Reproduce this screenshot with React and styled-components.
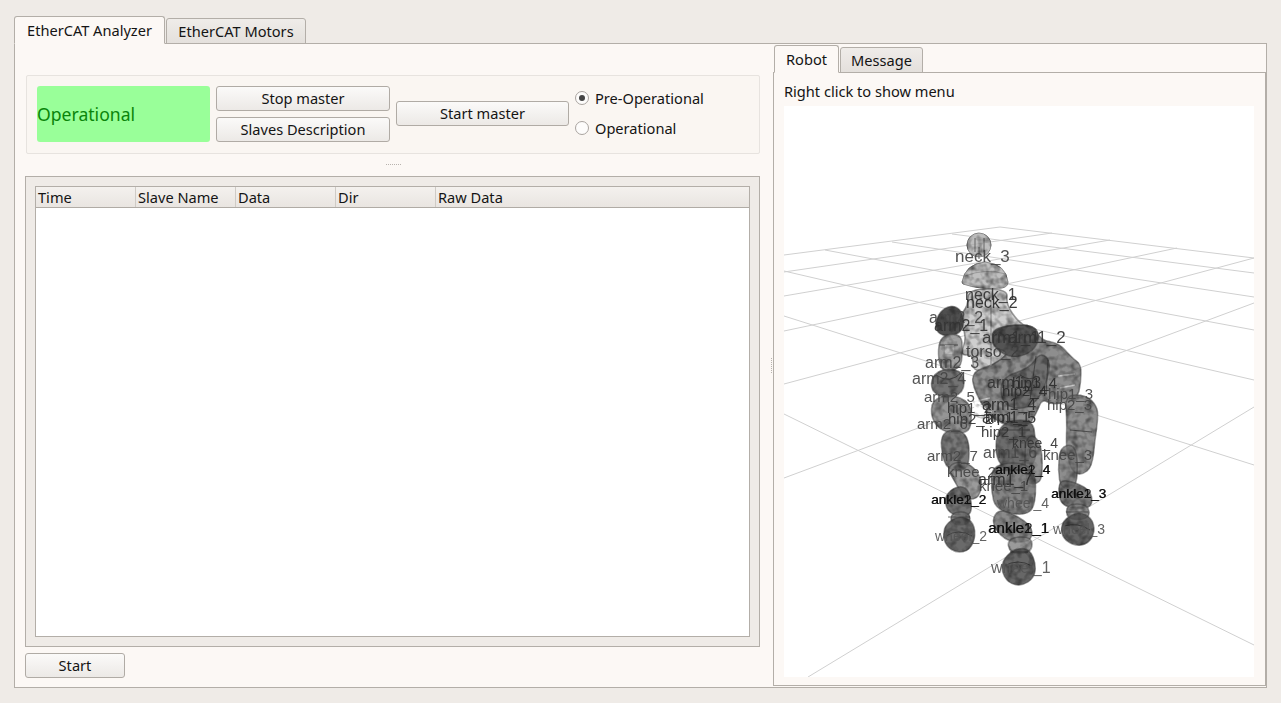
import React from "react";
import styled, { createGlobalStyle } from "styled-components";

const UI_FONT = '"Noto Sans", "Open Sans", "DejaVu Sans", sans-serif';

const GlobalStyle = createGlobalStyle`
  html, body {
    margin: 0;
    height: 703px;
    overflow: hidden;
    background: #efebe7;
  }
  body {
    font-family: ${UI_FONT};
    font-size: 14.6px;
    color: #141414;
  }
`;

const Page = styled.div`
  width: 1281px;
  height: 703px;
  box-sizing: border-box;
  padding: 16px 14px 15px;
  display: flex;
  flex-direction: column;
`;

const TabBar = styled.div`
  display: flex;
  align-items: flex-end;
  height: 28px;
  position: relative;
  z-index: 1;
  margin-bottom: -1px;
  padding-left: ${p => p.$inset || 0}px;
`;

const Tab = styled.div`
  box-sizing: border-box;
  width: ${p => p.width}px;
  height: ${p => (p.active ? "100%" : "calc(100% - 2px)")};
  margin-right: 1px;
  display: flex;
  align-items: center;
  justify-content: center;
  border: 1px solid #b3aea8;
  border-bottom: ${p => (p.active ? "1px solid #fcf8f5" : "1px solid #b3aea8")};
  border-radius: 3px 3px 0 0;
  background: ${p => (p.active ? "#fcf8f5" : "linear-gradient(#efece9, #e4e0dc)")};
  white-space: nowrap;
`;

const MainPane = styled.div`
  flex: 1;
  min-height: 0;
  display: flex;
  box-sizing: border-box;
  border: 1px solid #b3aea8;
  background: #fcf8f5;
  padding: 0 0 1px 10px;
`;

const LeftColumn = styled.div`
  width: 735px;
  display: flex;
  flex-direction: column;
  padding-top: 31px;
  box-sizing: border-box;
`;

const ControlBox = styled.div`
  margin-left: 1px;
  height: 79px;
  box-sizing: border-box;
  padding: 10px 10px 11px;
  display: flex;
  gap: 6px;
  align-items: stretch;
  border: 1px solid #e7e3df;
  border-radius: 2px;
  background: #faf6f2;
`;

const StatusLabel = styled.div`
  width: 173px;
  display: flex;
  align-items: center;
  border-radius: 3px;
  background: #99ff99;
  color: #0a850a;
  font-size: 17.6px;
`;

const ButtonStack = styled.div`
  width: 174px;
  display: flex;
  flex-direction: column;
  justify-content: space-between;
`;

const CenterSlot = styled.div`
  width: 173px;
  display: flex;
  align-items: center;
  padding-bottom: 1px;
`;

const Button = styled.div`
  box-sizing: border-box;
  width: ${p => (p.width ? `${p.width}px` : "100%")};
  height: 25px;
  padding-bottom: 2px;
  display: flex;
  align-items: center;
  justify-content: center;
  border: 1px solid #b0aba5;
  border-radius: 3px;
  background: linear-gradient(#fbfaf9, #ece9e6);
`;

const RadioGroup = styled.div`
  display: flex;
  flex-direction: column;
  justify-content: center;
  gap: 10px;
  padding-bottom: 2px;
`;

const RadioRow = styled.div`
  height: 20px;
  display: flex;
  align-items: center;
  gap: 6px;
`;

const RadioMark = styled.span`
  box-sizing: border-box;
  width: 14px;
  height: 14px;
  border-radius: 50%;
  border: 1px solid #a9a4a0;
  background: #fdfcfb;
  display: flex;
  align-items: center;
  justify-content: center;
  &::after {
    content: "";
    width: 6px;
    height: 6px;
    border-radius: 50%;
    background: ${p => (p.checked ? "#444" : "transparent")};
  }
`;

const RowHandle = styled.div`
  height: 22px;
  box-sizing: border-box;
  padding: 0 0 2px 2px;
  display: flex;
  align-items: center;
  justify-content: center;
  &::after {
    content: "";
    width: 15px;
    border-top: 1px dotted #b8b3ae;
  }
`;

const TableFrame = styled.div`
  height: 471px;
  box-sizing: border-box;
  padding: 9px;
  border: 1px solid #b3aea8;
  background: #efebe7;
  display: flex;
`;

const Table = styled.div`
  flex: 1;
  display: flex;
  flex-direction: column;
  border: 1px solid #b3aea8;
  background: #fff;
`;

const TableHead = styled.div`
  height: 20px;
  display: flex;
  border-bottom: 1px solid #b0aba5;
  background: linear-gradient(#f4f1ee, #e9e5e1);
`;

const HeadCell = styled.div`
  box-sizing: border-box;
  width: ${p => (p.last ? "auto" : "100px")};
  flex: ${p => (p.last ? 1 : "none")};
  padding-left: 2px;
  display: flex;
  align-items: center;
  border-right: ${p => (p.last ? "none" : "1px solid #cfcbc6")};
`;

const BottomRow = styled.div`
  padding-top: 6px;
`;

const ColumnHandle = styled.div`
  width: 13px;
  display: flex;
  align-items: center;
  &::after {
    content: "";
    margin-left: 11px;
    height: 15px;
    border-left: 1px dotted #b8b3ae;
  }
`;

const RightColumn = styled.div`
  flex: 1;
  display: flex;
  flex-direction: column;
  padding-top: 1px;
`;

const RobotPane = styled.div`
  flex: 1;
  min-height: 0;
  box-sizing: border-box;
  border: 1px solid #b3aea8;
  padding: 0 11px 8px 10px;
  display: flex;
  flex-direction: column;
`;

const Hint = styled.div`
  height: 33px;
  padding-top: 2px;
  box-sizing: border-box;
  display: flex;
  align-items: center;
`;

const Viewer = styled.svg`
  flex: 1;
  min-height: 0;
  width: 100%;
  display: block;
  background: #fff;
`;

const GRID_LINES = [
  [784, 255, 1000, 227],
  [784, 272, 1052, 233],
  [784, 296, 1110, 240],
  [784, 331, 1177, 248],
  [784, 384, 1254, 258],
  [784, 478, 1254, 303],
  [808, 677, 1254, 407],
  [1000, 227, 1254, 258],
  [952, 234, 1254, 273],
  [892, 242, 1254, 297],
  [825, 250, 1254, 330],
  [784, 271, 1254, 380],
  [784, 316, 1254, 465],
  [784, 414, 1254, 645],
];

// outlines of the translucent robot links, back to front
const LINKS = [
  // chest
  ["968 289 1008 289 1006 304 1019 323 1034 330 1010 352 990 368 973 372 973 354 960 356 967 336 958 318 968 306", "#c6c6c6", 0.85],
  // pelvis and right arm
  ["971 372 993 365 1010 353 993 347 991 331 1007 325 1035 325 1040 340 1059 343 1072 358 1081 364 1081 382 1077 400 1053 405 1042 399 1037 412 1027 429 993 422 975 393", "#7a7a7a", 0.85],
  ["991 333 1007 325 1035 325 1040 340 1030 354 1010 358 993 347", "#404040", 0.7],
  ["1000 378 1030 368 1040 352 1052 362 1042 396 1025 410 1002 405", "#505050", 0.5],
  // arm on the left
  ["936 318 945 307 957 306 964 316 963 331 950 337 936 333", "#303030", 0.85],
  ["938 336 961 333 963 352 960 370 939 372", "#909090", 0.85],
  ["932 376 945 368 964 372 964 393 945 399 931 391", "#505050", 0.8],
  ["932 400 950 394 970 402 972 422 967 434 942 432 931 418", "#7a7a7a", 0.8],
  ["940 430 968 430 970 468 955 472 943 464", "#606060", 0.85],
  ["946 466 965 460 982 476 980 498 966 500 956 484", "#828282", 0.8],
  ["945 495 957 486 968 488 972 505 970 516 955 516 946 509", "#5a5a5a", 0.85],
  ["951 512 970 512 970 525 951 525", "#7a7a7a", 0.8],
  ["946 524 958 516 972 520 976 535 970 550 957 553 946 546 943 534", "#505050", 0.85],
  // centre leg
  ["996 423 1032 418 1036 440 1035 470 996 470", "#525252", 0.85],
  ["1025 434 1041 439 1043 478 1035 485 1025 482", "#787878", 0.8],
  ["992 463 1035 463 1036 507 1023 516 996 510 991 490", "#6e6e6e", 0.85],
  ["994 514 1004 509 1032 525 1032 540 1018 543 1004 539 993 526", "#767676", 0.85],
  ["1007 538 1032 536 1032 553 1010 554", "#848484", 0.82],
  ["1004 558 1016 548 1030 549 1036 565 1034 578 1022 586 1008 583 1001 570", "#4c4c4c", 0.85],
  // right leg
  ["1065 395 1086 395 1097 406 1098 418 1095 440 1092 467 1082 475 1072 472 1066 452 1067 420", "#7a7a7a", 0.85],
  ["1060 447 1074 444 1078 462 1076 489 1061 489 1058 470", "#707070", 0.8],
  ["1058 482 1068 480 1090 489 1093 505 1083 509 1060 506", "#646464", 0.85],
  ["1066 504 1088 504 1090 519 1067 520", "#7e7e7e", 0.8],
  ["1064 520 1078 511 1092 518 1095 532 1088 544 1074 546 1063 538 1061 528", "#4a4a4a", 0.85],
];

const SHADING = [
  ["M973 402L990 398M975 408L988 405M978 414L992 412M1058 376L1075 374M1060 388L1075 385", "#f0f0f0", 1.4],
  ["M1036 356L1030 400M1048 360L1046 395M1020 375Q1030 382 1036 376M1000 430H1030M1000 470H1032", "#2c2c2c", 1],
  ["M940 345H958M936 375Q950 385 962 372M1070 430L1092 432M946 536Q958 528 972 536", "#2c2c2c", 1],
  ["M1064 526Q1078 522 1090 530M1004 566Q1018 558 1032 566M1010 552H1028M948 517H970M1066 512H1088", "#222222", 1],
];

const LABELS = [
  ["neck_3", 955, 262, 17, "#444"],
  ["neck_1", 965, 300, 16, "#333"],
  ["neck_2", 966, 308, 16, "#2a2a2a"],
  ["arm2_2", 929, 323, 16, "#444"],
  ["arm2_1", 934, 331, 16, "#333"],
  ["arm1_1", 982, 343, 17, "#333"],
  ["arm1_2", 1008, 343, 17, "#333"],
  ["torso_2", 966, 357, 16, "#3c3c3c"],
  ["arm2_3", 925, 368, 16, "#444"],
  ["arm2_4", 912, 384, 16, "#444"],
  ["arm1_3", 987, 388, 16, "#333"],
  ["hip1_4", 1012, 388, 15, "#2a2a2a"],
  ["hip2_4", 1002, 396, 15, "#2a2a2a"],
  ["hip1_3", 1048, 399, 15, "#444"],
  ["arm2_5", 924, 402, 15, "#444"],
  ["hip2_3", 1047, 410, 15, "#444"],
  ["arm1_4", 982, 410, 16, "#2a2a2a"],
  ["hip1_2", 947, 413, 15, "#333"],
  ["hip2_2", 948, 424, 15, "#333"],
  ["arm1_5", 982, 423, 16, "#2a2a2a"],
  ["hip1_1", 985, 422, 15, "#2a2a2a"],
  ["arm2_6", 917, 429, 15, "#444"],
  ["hip2_1", 981, 437, 15, "#333"],
  ["knee_4", 1012, 448, 14, "#333"],
  ["arm1_6", 983, 458, 16, "#444"],
  ["knee_3", 1043, 460, 15, "#444"],
  ["arm2_7", 927, 461, 15, "#444"],
  ["knee_2", 947, 477, 15, "#444"],
  ["ankle1_4", 995, 474, 13.6, "#111"],
  ["ankle2_4", 995.5, 474, 13.6, "#111"],
  ["arm1_7", 978, 485, 16, "#2a2a2a"],
  ["knee_1", 979, 491, 15, "#444"],
  ["ankle1_3", 1051, 498, 13.6, "#0c0c0c"],
  ["ankle2_3", 1051.5, 498, 13.6, "#0c0c0c"],
  ["ankle1_2", 931, 504, 13.6, "#0c0c0c"],
  ["ankle2_2", 931.5, 504, 13.6, "#0c0c0c"],
  ["wheel_4", 997, 508, 14, "#555"],
  ["ankle1_1", 988, 533, 15, "#0c0c0c"],
  ["ankle2_1", 988.5, 533, 15, "#0c0c0c"],
  ["wheel_3", 1053, 534, 14, "#555"],
  ["wheel_2", 935, 541, 14, "#555"],
  ["wheel_1", 991, 573, 16, "#555"],
];

// rounds a list of corner points into a closed curve through the edge midpoints
const smoothOutline = list => {
  const nums = list.split(" ").map(Number);
  const pts = [];
  for (let i = 0; i < nums.length; i += 2) pts.push([nums[i], nums[i + 1]]);
  const mid = (a, b) => [(a[0] + b[0]) / 2, (a[1] + b[1]) / 2];
  const start = mid(pts[pts.length - 1], pts[0]);
  let d = `M${start[0]} ${start[1]}`;
  pts.forEach((p, i) => {
    const m = mid(p, pts[(i + 1) % pts.length]);
    d += `Q${p[0]} ${p[1]} ${m[0]} ${m[1]}`;
  });
  return d + "Z";
};

const RobotScene = () => (
  <Viewer viewBox="784 106 470 571" preserveAspectRatio="xMinYMin slice">
    <defs>
      <filter id="mottle" x="-5%" y="-5%" width="110%" height="110%" colorInterpolationFilters="sRGB">
        <feTurbulence type="fractalNoise" baseFrequency="0.14" numOctaves="2" seed="7" result="noise" />
        <feColorMatrix
          in="noise"
          type="matrix"
          values="0 0 0 0 0.1  0 0 0 0 0.1  0 0 0 0 0.1  1.5 0 0 0 -0.6"
          result="dark"
        />
        <feComposite in="dark" in2="SourceAlpha" operator="in" result="tex" />
        <feMerge result="merged">
          <feMergeNode in="SourceGraphic" />
          <feMergeNode in="tex" />
        </feMerge>
        <feGaussianBlur in="merged" stdDeviation="0.6" />
      </filter>
      <filter id="softer" x="-5%" y="-5%" width="110%" height="110%">
        <feGaussianBlur stdDeviation="0.3" />
      </filter>
    </defs>
    {GRID_LINES.map(([x1, y1, x2, y2], i) => (
      <line key={i} x1={x1} y1={y1} x2={x2} y2={y2} stroke="#d0d0d0" strokeWidth="1" />
    ))}
    <g filter="url(#mottle)">
      <circle cx="979" cy="245" r="12" fill="#a8a8a8" fillOpacity="0.75" stroke="#8a8a8a" />
      <path d="M975 238v14M984 238v14M979 247v12" stroke="#666" fill="none" />
      <path
        d="M962 282Q965 264 985 262Q1006 264 1008 282Q1008 287 1002 288Q980 290 963 284Z"
        fill="#b8b8b8"
        fillOpacity="0.9"
        stroke="#8c8c8c"
      />
      <path d="M965 276Q985 268 1006 274" stroke="#999" fill="none" />
      {LINKS.map(([points, fill, op], i) => (
        <path
          key={i}
          d={smoothOutline(points)}
          fill={fill}
          fillOpacity={op}
          stroke="#3a3a3a"
          strokeOpacity="0.45"
          strokeWidth="1.5"
        />
      ))}
      <line x1="991" y1="300" x2="991" y2="366" stroke="#999" strokeWidth="1.5" />
      {SHADING.map(([d, stroke, w], i) => (
        <path key={i} d={d} stroke={stroke} strokeWidth={w} strokeOpacity="0.65" fill="none" />
      ))}
      <rect x="945" y="345" width="9" height="9" fill="#c9c9c9" fillOpacity="0.7" />
      <path d="M974 402L986 408L985 420L974 416Z" fill="#fff" fillOpacity="0.8" />
    </g>
    <g filter="url(#softer)" fontFamily='"Liberation Sans", Arial, sans-serif' fillOpacity="0.92">
      {LABELS.map(([text, x, y, size, color], i) => (
        <text key={i} x={x} y={y} fontSize={size} fill={color}>
          {text}
        </text>
      ))}
    </g>
  </Viewer>
);

const COLUMNS = ["Time", "Slave Name", "Data", "Dir", "Raw Data"];

const App = () => (
  <Page>
    <GlobalStyle />
    <TabBar>
      <Tab active width={151}>EtherCAT Analyzer</Tab>
      <Tab width={140}>EtherCAT Motors</Tab>
    </TabBar>
    <MainPane>
      <LeftColumn>
        <ControlBox>
          <StatusLabel>Operational</StatusLabel>
          <ButtonStack>
            <Button>Stop master</Button>
            <Button>Slaves Description</Button>
          </ButtonStack>
          <CenterSlot>
            <Button>Start master</Button>
          </CenterSlot>
          <RadioGroup>
            <RadioRow><RadioMark checked />Pre-Operational</RadioRow>
            <RadioRow><RadioMark />Operational</RadioRow>
          </RadioGroup>
        </ControlBox>
        <RowHandle />
        <TableFrame>
          <Table>
            <TableHead>
              {COLUMNS.map((name, i) => (
                <HeadCell key={name} last={i === COLUMNS.length - 1}>{name}</HeadCell>
              ))}
            </TableHead>
          </Table>
        </TableFrame>
        <BottomRow>
          <Button width={100}>Start</Button>
        </BottomRow>
      </LeftColumn>
      <ColumnHandle />
      <RightColumn>
        <TabBar $inset={1}>
          <Tab active width={65}>Robot</Tab>
          <Tab width={83}>Message</Tab>
        </TabBar>
        <RobotPane>
          <Hint>Right click to show menu</Hint>
          <RobotScene />
        </RobotPane>
      </RightColumn>
    </MainPane>
  </Page>
);

export default App;
